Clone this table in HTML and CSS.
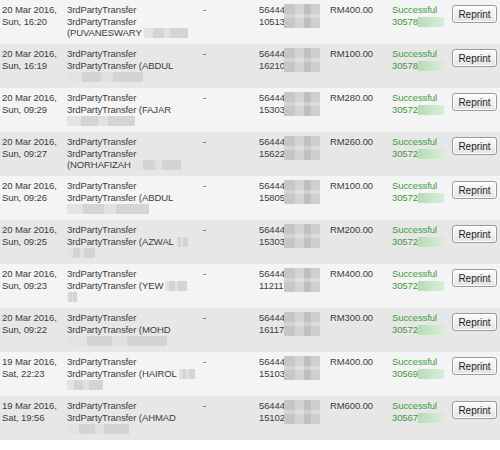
FILE: index.html
```html
<!DOCTYPE html>
<html>
<head>
<meta charset="utf-8">
<link rel="stylesheet" href="styles.css">
</head>
<body>
<div class="table">
  <div class="row odd">
    <div class="c date">20 Mar 2016,<br>Sun, 16:20</div>
    <div class="c desc">3rdPartyTransfer<br>3rdPartyTransfer<br>(PUVANESWARY<span class="blur b-name" style="width:44px"></span></div>
    <div class="c dash">-</div>
    <div class="c ref"><div class="refwrap">56444<br>10513<span class="blur b-ref"></span></div></div>
    <div class="c amt">RM400.00</div>
    <div class="c status">Successful<br>30578<span class="blur b-green"></span></div>
    <div class="c act"><button class="btn">Reprint</button></div>
  </div>
  <div class="row even">
    <div class="c date">20 Mar 2016,<br>Sun, 16:19</div>
    <div class="c desc">3rdPartyTransfer<br>3rdPartyTransfer (ABDUL<br><span class="blur b-name" style="width:76px;margin-left:0"></span></div>
    <div class="c dash">-</div>
    <div class="c ref"><div class="refwrap">56444<br>16210<span class="blur b-ref"></span></div></div>
    <div class="c amt">RM100.00</div>
    <div class="c status">Successful<br>30578<span class="blur b-green"></span></div>
    <div class="c act"><button class="btn">Reprint</button></div>
  </div>
  <div class="row odd">
    <div class="c date">20 Mar 2016,<br>Sun, 09:29</div>
    <div class="c desc">3rdPartyTransfer<br>3rdPartyTransfer (FAJAR<br><span class="blur b-name" style="width:68px;margin-left:0"></span></div>
    <div class="c dash">-</div>
    <div class="c ref"><div class="refwrap">56444<br>15303<span class="blur b-ref"></span></div></div>
    <div class="c amt">RM280.00</div>
    <div class="c status">Successful<br>30572<span class="blur b-green"></span></div>
    <div class="c act"><button class="btn">Reprint</button></div>
  </div>
  <div class="row even">
    <div class="c date">20 Mar 2016,<br>Sun, 09:27</div>
    <div class="c desc">3rdPartyTransfer<br>3rdPartyTransfer<br>(NORHAFIZAH<span class="blur b-name" style="width:48px"></span></div>
    <div class="c dash">-</div>
    <div class="c ref"><div class="refwrap">56444<br>15622<span class="blur b-ref"></span></div></div>
    <div class="c amt">RM260.00</div>
    <div class="c status">Successful<br>30572<span class="blur b-green"></span></div>
    <div class="c act"><button class="btn">Reprint</button></div>
  </div>
  <div class="row odd">
    <div class="c date">20 Mar 2016,<br>Sun, 09:26</div>
    <div class="c desc">3rdPartyTransfer<br>3rdPartyTransfer (ABDUL<br><span class="blur b-name" style="width:82px;margin-left:0"></span></div>
    <div class="c dash">-</div>
    <div class="c ref"><div class="refwrap">56444<br>15805<span class="blur b-ref"></span></div></div>
    <div class="c amt">RM100.00</div>
    <div class="c status">Successful<br>30572<span class="blur b-green"></span></div>
    <div class="c act"><button class="btn">Reprint</button></div>
  </div>
  <div class="row even">
    <div class="c date">20 Mar 2016,<br>Sun, 09:25</div>
    <div class="c desc">3rdPartyTransfer<br>3rdPartyTransfer (AZWAL<span class="blur b-name" style="width:12px"></span><br><span class="blur b-name" style="width:28px;margin-left:0"></span></div>
    <div class="c dash">-</div>
    <div class="c ref"><div class="refwrap">56444<br>15303<span class="blur b-ref"></span></div></div>
    <div class="c amt">RM200.00</div>
    <div class="c status">Successful<br>30572<span class="blur b-green"></span></div>
    <div class="c act"><button class="btn">Reprint</button></div>
  </div>
  <div class="row odd">
    <div class="c date">20 Mar 2016,<br>Sun, 09:23</div>
    <div class="c desc">3rdPartyTransfer<br>3rdPartyTransfer (YEW<span class="blur b-name" style="width:22px"></span><br><span class="blur b-name" style="width:10px;margin-left:0"></span></div>
    <div class="c dash">-</div>
    <div class="c ref"><div class="refwrap">56444<br>11211<span class="blur b-ref"></span></div></div>
    <div class="c amt">RM400.00</div>
    <div class="c status">Successful<br>30572<span class="blur b-green"></span></div>
    <div class="c act"><button class="btn">Reprint</button></div>
  </div>
  <div class="row even">
    <div class="c date">20 Mar 2016,<br>Sun, 09:22</div>
    <div class="c desc">3rdPartyTransfer<br>3rdPartyTransfer (MOHD<br><span class="blur b-name" style="width:100px;margin-left:0"></span></div>
    <div class="c dash">-</div>
    <div class="c ref"><div class="refwrap">56444<br>16117<span class="blur b-ref"></span></div></div>
    <div class="c amt">RM300.00</div>
    <div class="c status">Successful<br>30572<span class="blur b-green"></span></div>
    <div class="c act"><button class="btn">Reprint</button></div>
  </div>
  <div class="row odd">
    <div class="c date">19 Mar 2016,<br>Sat, 22:23</div>
    <div class="c desc">3rdPartyTransfer<br>3rdPartyTransfer (HAIROL<span class="blur b-name" style="width:16px"></span><br><span class="blur b-name" style="width:36px;margin-left:0"></span></div>
    <div class="c dash">-</div>
    <div class="c ref"><div class="refwrap">56444<br>15103<span class="blur b-ref"></span></div></div>
    <div class="c amt">RM400.00</div>
    <div class="c status">Successful<br>30569<span class="blur b-green"></span></div>
    <div class="c act"><button class="btn">Reprint</button></div>
  </div>
  <div class="row even">
    <div class="c date">19 Mar 2016,<br>Sat, 19:56</div>
    <div class="c desc">3rdPartyTransfer<br>3rdPartyTransfer (AHMAD<br><span class="blur b-name" style="width:62px;margin-left:0"></span></div>
    <div class="c dash">-</div>
    <div class="c ref"><div class="refwrap">56444<br>15102<span class="blur b-ref"></span></div></div>
    <div class="c amt">RM600.00</div>
    <div class="c status">Successful<br>30567<span class="blur b-green"></span></div>
    <div class="c act"><button class="btn">Reprint</button></div>
  </div>
</div>
</body>
</html>
```

FILE: styles.css
```css
html, body {
  margin: 0;
  padding: 0;
  background: #ffffff;
}
body {
  font-family: "Liberation Sans", Arial, sans-serif;
  font-size: 9.5px;
  letter-spacing: -0.1px;
  line-height: 11.7px;
  color: #3c3c3c;
}
.table {
  width: 500px;
}
.row {
  display: grid;
  grid-template-columns: 67px 136px 56px 71px 62px 60px 48px;
  height: 44px;
  box-sizing: border-box;
}
.odd { background: #f4f4f4; }
.even { background: #e7e7e7; }
.c {
  padding-top: 4px;
  white-space: nowrap;
}
.date { padding-left: 2px; }
.refwrap {
  position: relative;
}
.blur {
  display: inline-block;
  vertical-align: top;
  height: 10px;
  margin-top: 1px;
  margin-left: 2px;
}
.b-name {
  background:
    linear-gradient(90deg, rgba(255,255,255,0.35) 0 20%, transparent 20% 45%, rgba(255,255,255,0.3) 45% 60%, transparent 60% 100%),
    #d4d4d4;
}
.b-ref {
  position: absolute;
  left: 25px;
  top: 0;
  width: 36px;
  height: 24px;
  margin: 0;
  background:
    linear-gradient(180deg, transparent 0 40%, rgba(255,255,255,0.25) 40% 60%, transparent 60%),
    linear-gradient(90deg, #c6c6c6 0 30%, #d4d4d4 30% 55%, #c0c0c0 55% 75%, #cfcfcf 75%);
}
.status {
  color: #3c9a3c;
}
.b-green {
  width: 26px;
  margin-left: 0;
  background: linear-gradient(90deg, #b6dbb6, #cde8cd 60%, #d8ecd8);
}
.act {
  padding-top: 5px;
}
.btn {
  width: 45px;
  height: 18px;
  padding: 0;
  font-family: "Liberation Sans", Arial, sans-serif;
  font-size: 10px;
  color: #222;
  background: linear-gradient(#fbfbfb, #e4e4e4);
  border: 1px solid #9a9a9a;
  border-radius: 3px;
  box-shadow: inset 0 0 0 1px #ffffff;
}
```
